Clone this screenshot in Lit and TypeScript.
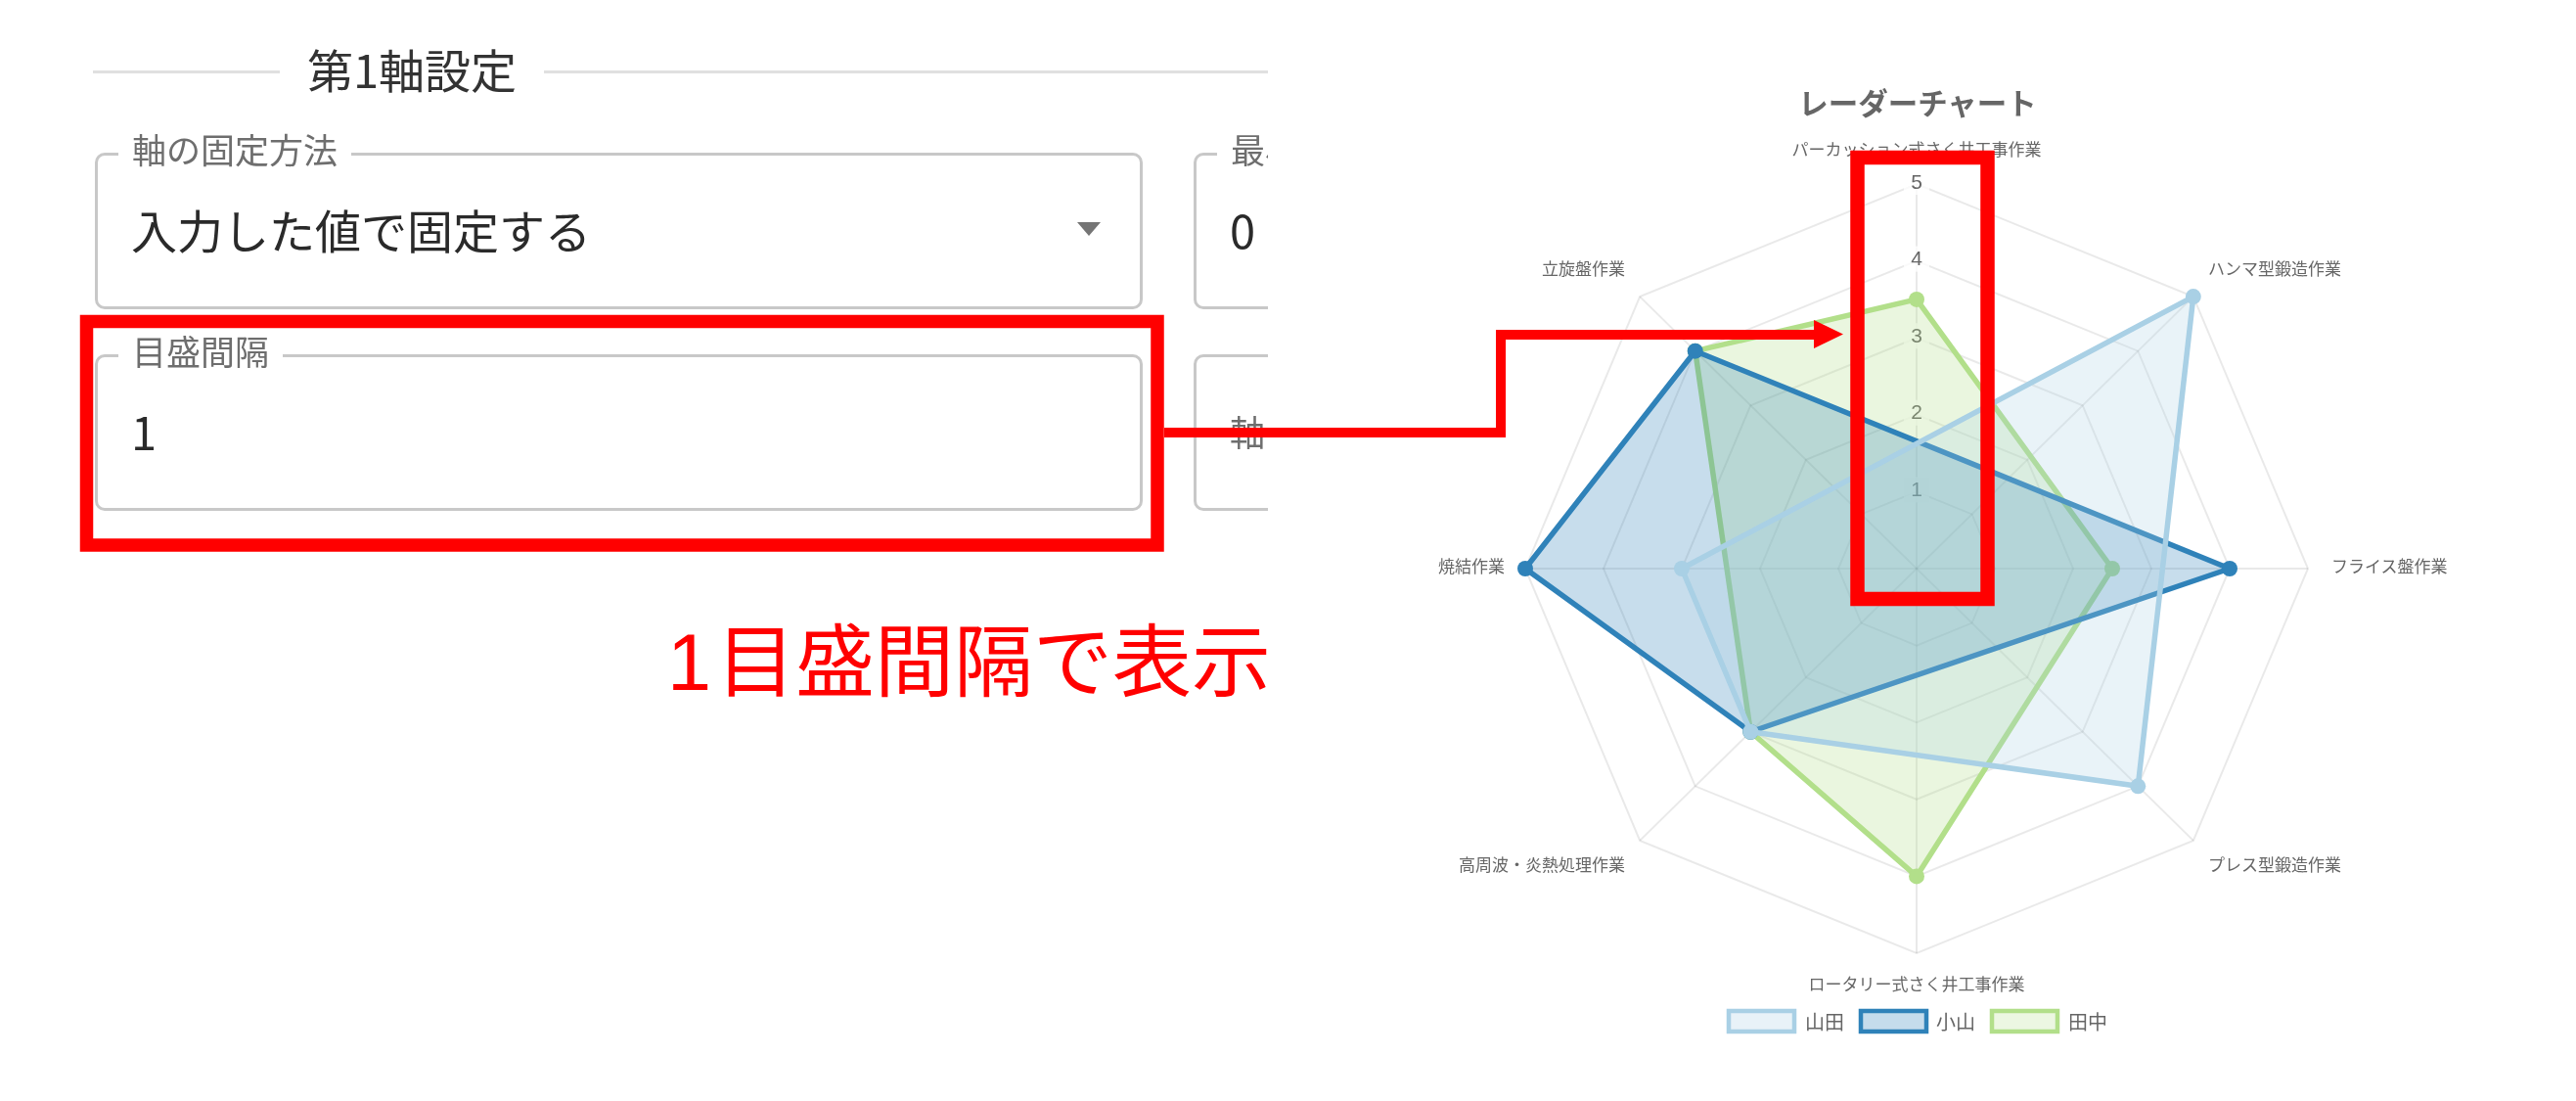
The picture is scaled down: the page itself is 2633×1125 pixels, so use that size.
import { LitElement, html, svg, css } from "lit";
import { customElement } from "lit/decorators.js";

const CX = 1959;
const CY = 581;
const RX = 80;
const RY = 78.6;
const N = 8;

function pt(axis: number, value: number): [number, number] {
  const a = (axis * Math.PI * 2) / N;
  return [CX + RX * value * Math.sin(a), CY - RY * value * Math.cos(a)];
}
const ptsStr = (list: [number, number][]) => list.map((p) => p.join(",")).join(" ");

type Series = { stroke: string; fill: string; values: [number, number][] };
// Drawn last-on-top: 田中, 小山, 山田. Axes without a value are skipped and the line spans the gap.
const SERIES: Series[] = [
  {
    stroke: "#b2df8a",
    fill: "rgba(178,223,138,0.27)",
    values: [[0, 3.5], [2, 2.5], [4, 4], [5, 3], [7, 4]],
  },
  {
    stroke: "#2f82b9",
    fill: "rgba(31,120,180,0.25)",
    values: [[2, 4], [5, 3], [6, 5], [7, 4]],
  },
  {
    stroke: "#a9d0e5",
    fill: "rgba(166,206,227,0.25)",
    values: [[1, 5], [3, 4], [5, 3], [6, 3]],
  },
];

const AXIS_LABELS: { t: string; x: number; y: number; a: string }[] = [
  { t: "パーカッション式さく井工事作業", x: 1959, y: 151, a: "middle" },
  { t: "ハンマ型鍛造作業", x: 2257, y: 273, a: "start" },
  { t: "フライス盤作業", x: 2383, y: 577, a: "start" },
  { t: "プレス型鍛造作業", x: 2257, y: 882, a: "start" },
  { t: "ロータリー式さく井工事作業", x: 1959, y: 1004, a: "middle" },
  { t: "高周波・炎熱処理作業", x: 1661, y: 882, a: "end" },
  { t: "焼結作業", x: 1538, y: 577, a: "end" },
  { t: "立旋盤作業", x: 1661, y: 273, a: "end" },
];

const LEGEND = [
  { name: "山田", x: 1767, tx: 1845, stroke: "#a9d0e5", fill: "#e8f2f8" },
  { name: "小山", x: 1902, tx: 1979, stroke: "#2f82b9", fill: "#c5dcec" },
  { name: "田中", x: 2036, tx: 2114, stroke: "#b2df8a", fill: "#ecf7e2" },
];

@customElement("radar-chart")
class RadarChart extends LitElement {
  static styles = css`
    :host {
      display: block;
    }
    svg {
      display: block;
      filter: blur(0.7px);
    }
    text {
      font-family: "Noto Sans CJK JP", "Liberation Sans", sans-serif;
      fill: #666;
    }
    .title {
      font-size: 30.5px;
      font-weight: 700;
    }
    .axis {
      font-size: 17px;
    }
    .tick {
      font-size: 21px;
      font-family: "Liberation Sans", sans-serif;
    }
    .legend {
      font-size: 20px;
    }
    .grid {
      fill: none;
      stroke: rgba(0, 0, 0, 0.085);
      stroke-width: 2;
    }
    .backdrop {
      fill: rgba(255, 255, 255, 0.75);
    }
  `;

  render() {
    const axes = Array.from({ length: N }, (_, i) => i);
    const rings = [1, 2, 3, 4, 5];
    return html`
      <svg width="1337" height="1125" viewBox="1296 0 1337 1125">
        ${rings.map(
          (r) => svg`<polygon class="grid" points=${ptsStr(axes.map((a) => pt(a, r)))}></polygon>`
        )}
        ${axes.map((a) => {
          const [x, y] = pt(a, 5);
          return svg`<line class="grid" x1=${CX} y1=${CY} x2=${x} y2=${y}></line>`;
        })}
        ${rings.map((r) => {
          const y = CY - RY * r;
          return svg`<rect class="backdrop" x=${CX - 13} y=${y - 15} width="26" height="26"></rect>
            <text class="tick" x=${CX} y=${y - 3} text-anchor="middle" dominant-baseline="central">${r}</text>`;
        })}
        <text class="title" x=${CX + 1} y="104" text-anchor="middle" dominant-baseline="central">レーダーチャート</text>
        ${AXIS_LABELS.map(
          (l) =>
            svg`<text class="axis" x=${l.x} y=${l.y} text-anchor=${l.a} dominant-baseline="central">${l.t}</text>`
        )}
        ${SERIES.map((s) => {
          const pts = s.values.map(([a, v]) => pt(a, v));
          return svg`<polygon points=${ptsStr(pts)} fill=${s.fill} stroke=${s.stroke} stroke-width="5.5" stroke-linejoin="round"></polygon>
            ${pts.map(([x, y]) => svg`<circle cx=${x} cy=${y} r="8" fill=${s.stroke}></circle>`)}`;
        })}
        ${LEGEND.map(
          (l) => svg`<rect x=${l.x} y="1033" width="67" height="21" fill=${l.fill} stroke=${l.stroke} stroke-width="4.5"></rect>
            <text class="legend" x=${l.tx} y="1043" dominant-baseline="central">${l.name}</text>`
        )}
      </svg>
    `;
  }
}

@customElement("app-root")
class AppRoot extends LitElement {
  static styles = css`
    :host {
      display: block;
      position: relative;
      width: 2633px;
      height: 1125px;
      background: #fff;
      overflow: hidden;
      font-family: "Noto Sans CJK JP", "Liberation Sans", sans-serif;
    }
    .page {
      display: flex;
      align-items: flex-start;
    }
    .settings {
      width: 1296px;
      height: 551px;
      flex: none;
      box-sizing: border-box;
      overflow: hidden;
      padding: 40px 0 0 95px;
      filter: blur(0.5px);
    }
    .section-head {
      display: flex;
      align-items: center;
      gap: 28px;
      height: 60px;
      font-size: 47px;
      line-height: 60px;
      color: #333;
      margin-bottom: 32px;
    }
    .rule {
      height: 3px;
      background: #e0e0e0;
      flex: 1;
      position: relative;
      top: 3px;
    }
    .rule.short {
      flex: none;
      width: 191px;
    }
    .rows {
      display: grid;
      grid-template-columns: 1071px 1071px;
      column-gap: 52px;
      row-gap: 22px;
      padding-left: 2px;
    }
    fieldset {
      margin: 0;
      height: 184px;
      box-sizing: border-box;
      border: 3px solid #c8c8c8;
      border-radius: 10px;
      padding: 0 34px;
      min-width: 0;
    }
    legend {
      margin-inline-start: -13px;
      padding: 0 14px 10px;
      font-size: 35px;
      line-height: 40px;
      color: #6e6e6e;
      white-space: nowrap;
    }
    legend.empty {
      width: 0;
      padding: 0 0 10px;
      margin-inline-start: 0;
      overflow: hidden;
    }
    .value {
      display: flex;
      align-items: center;
      justify-content: space-between;
      height: 60px;
      margin-top: 22px;
      font-size: 47px;
      line-height: 60px;
      color: #2a2a2a;
    }
    .value.muted {
      font-size: 36px;
      color: #6e6e6e;
    }
    .caret {
      width: 0;
      height: 0;
      border-left: 12px solid transparent;
      border-right: 12px solid transparent;
      border-top: 14px solid #757575;
      margin-right: 6px;
    }
    .peek {
      grid-column: 1;
      margin: 3px 0 0 110px;
      font-size: 35px;
      line-height: 40px;
      color: #b0b0b0;
    }
    .overlay {
      position: absolute;
      inset: 0;
      width: 2633px;
      height: 1125px;
      pointer-events: none;
    }
    .caption {
      position: absolute;
      left: 682px;
      top: 615px;
      font-size: 81px;
      line-height: 110px;
      color: #ff0000;
      white-space: nowrap;
    }
    .digit {
      font-family: "Liberation Sans", sans-serif;
      margin-right: 5px;
    }
  `;

  render() {
    return html`
      <div class="page">
        <section class="settings">
          <div class="section-head">
            <div class="rule short"></div>
            <span>第1軸設定</span>
            <div class="rule"></div>
          </div>
          <div class="rows">
            <fieldset>
              <legend>軸の固定方法</legend>
              <div class="value"><span>入力した値で固定する</span><i class="caret"></i></div>
            </fieldset>
            <fieldset>
              <legend>最小値</legend>
              <div class="value"><span>0</span></div>
            </fieldset>
            <fieldset>
              <legend>目盛間隔</legend>
              <div class="value"><span>1</span></div>
            </fieldset>
            <fieldset>
              <legend class="empty">&nbsp;</legend>
              <div class="value muted"><span>軸</span></div>
            </fieldset>
            <div class="peek">定数</div>
          </div>
        </section>
        <radar-chart></radar-chart>
      </div>
      <svg class="overlay" viewBox="0 0 2633 1125">
        <rect x="88.5" y="328.5" width="1094.5" height="228.5" fill="none" stroke="#ff0000" stroke-width="13.5"></rect>
        <polyline points="1190,442 1534,442 1534,342 1858,342" fill="none" stroke="#ff0000" stroke-width="10"></polyline>
        <polygon points="1854,327 1884,341.5 1854,356" fill="#ff0000"></polygon>
        <rect x="1898.5" y="161" width="133" height="451" fill="none" stroke="#ff0000" stroke-width="14.5"></rect>
      </svg>
      <div class="caption"><span class="digit">1</span>目盛間隔で表示</div>
    `;
  }
}
